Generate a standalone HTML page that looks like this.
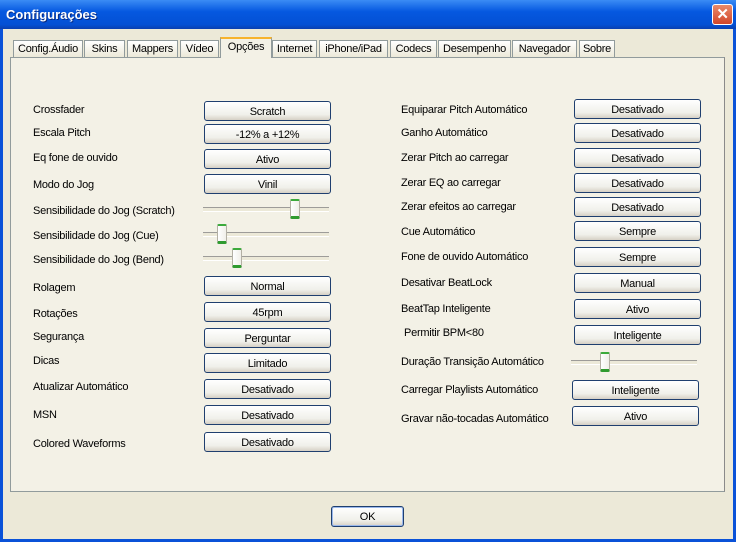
<!DOCTYPE html><html><head><meta charset="utf-8"><style>
body{margin:0;width:736px;height:542px;overflow:hidden;font-family:"Liberation Sans",sans-serif;font-size:11px;letter-spacing:-0.25px;color:#000}
.win{position:absolute;left:0;top:0;width:736px;height:542px;background:#0a52d8}
.title{position:absolute;left:0;top:0;width:736px;height:29px;background:linear-gradient(#3b8cf5,#0558e0 40%,#0450d4 85%,#0a3fb0);}
.title span{position:absolute;left:6px;top:7px;color:#fff;font-weight:bold;font-size:13px;letter-spacing:0;text-shadow:1px 1px #0a2a80}
.close{position:absolute;left:712px;top:4px;width:19px;height:19px;background:linear-gradient(#e98a6a,#d2452a);border:1px solid #fff;border-radius:3px;color:#fff;font-weight:bold;font-size:15px;text-align:center;line-height:19px}
.body{position:absolute;left:3px;top:29px;width:730px;height:510px;background:#ece9d8}
.panel{position:absolute;left:10px;top:57px;width:713px;height:433px;background:#f3f1e6;border:1px solid #919b9c;border-right-color:#8a8a8a}
.tab{position:absolute;top:40px;height:17px;background:linear-gradient(#fff,#ece9d8);border:1px solid #919b9c;border-bottom:none;text-align:center;line-height:17px;box-sizing:border-box}
.tab.sel{top:37px;height:21px;background:#f3f1e6;border-top:2px solid #f7b32d;line-height:16px}
.l{position:absolute;white-space:nowrap}
.b{position:absolute;width:127px;height:20px;box-sizing:border-box;border:1px solid #1f3f6f;border-radius:3px;background:linear-gradient(#fff,#f0f0ea 70%,#d6d0c5);text-align:center;line-height:20px}
.tr{position:absolute;width:126px;height:3px;border-top:1px solid #9d9c99;border-bottom:1px solid #fff;background:#ece9d8}
.th{position:absolute;width:10px;height:20px;box-sizing:border-box;border:1px solid #b3b0a4;border-top:2px solid #3caa3c;border-bottom:3px solid #2f9b2f;background:linear-gradient(90deg,#fff,#f0efe9);border-radius:2px}
</style></head><body><div class="win">
<div class="title"><span>Configurações</span><div class="close">✕</div></div>
<div class="body"></div>
<div class="panel"></div>
<div class="tab" style="left:13px;width:70px">Config.Áudio</div>
<div class="tab" style="left:84px;width:41px">Skins</div>
<div class="tab" style="left:127px;width:51px">Mappers</div>
<div class="tab" style="left:180px;width:39px">Vídeo</div>
<div class="tab sel" style="left:220px;width:52px">Opções</div>
<div class="tab" style="left:272px;width:45px">Internet</div>
<div class="tab" style="left:319px;width:69px">iPhone/iPad</div>
<div class="tab" style="left:390px;width:47px">Codecs</div>
<div class="tab" style="left:438px;width:73px">Desempenho</div>
<div class="tab" style="left:512px;width:65px">Navegador</div>
<div class="tab" style="left:579px;width:36px">Sobre</div>

<div class="l" style="left:33px;top:104px">Crossfader</div><div class="b" style="left:204px;top:101px">Scratch</div>
<div class="l" style="left:33px;top:127px">Escala Pitch</div><div class="b" style="left:204px;top:124px">-12% a +12%</div>
<div class="l" style="left:33px;top:152px">Eq fone de ouvido</div><div class="b" style="left:204px;top:149px">Ativo</div>
<div class="l" style="left:33px;top:179px">Modo do Jog</div><div class="b" style="left:204px;top:174px">Vinil</div>
<div class="l" style="left:33px;top:205px">Sensibilidade do Jog (Scratch)</div><div class="tr" style="left:203px;top:207px"></div><div class="th" style="left:290px;top:199px"></div>
<div class="l" style="left:33px;top:230px">Sensibilidade do Jog (Cue)</div><div class="tr" style="left:203px;top:232px"></div><div class="th" style="left:217px;top:224px"></div>
<div class="l" style="left:33px;top:254px">Sensibilidade do Jog (Bend)</div><div class="tr" style="left:203px;top:256px"></div><div class="th" style="left:232px;top:248px"></div>
<div class="l" style="left:33px;top:282px">Rolagem</div><div class="b" style="left:204px;top:276px">Normal</div>
<div class="l" style="left:33px;top:308px">Rotações</div><div class="b" style="left:204px;top:302px">45rpm</div>
<div class="l" style="left:33px;top:331px">Segurança</div><div class="b" style="left:204px;top:328px">Perguntar</div>
<div class="l" style="left:33px;top:355px">Dicas</div><div class="b" style="left:204px;top:353px">Limitado</div>
<div class="l" style="left:33px;top:381px">Atualizar Automático</div><div class="b" style="left:204px;top:379px">Desativado</div>
<div class="l" style="left:33px;top:409px">MSN</div><div class="b" style="left:204px;top:405px">Desativado</div>
<div class="l" style="left:33px;top:438px">Colored Waveforms</div><div class="b" style="left:204px;top:432px">Desativado</div>

<div class="l" style="left:401px;top:104px">Equiparar Pitch Automático</div><div class="b" style="left:574px;top:99px">Desativado</div>
<div class="l" style="left:401px;top:127px">Ganho Automático</div><div class="b" style="left:574px;top:123px">Desativado</div>
<div class="l" style="left:401px;top:152px">Zerar Pitch ao carregar</div><div class="b" style="left:574px;top:148px">Desativado</div>
<div class="l" style="left:401px;top:177px">Zerar EQ ao carregar</div><div class="b" style="left:574px;top:173px">Desativado</div>
<div class="l" style="left:401px;top:201px">Zerar efeitos ao carregar</div><div class="b" style="left:574px;top:197px">Desativado</div>
<div class="l" style="left:401px;top:226px">Cue Automático</div><div class="b" style="left:574px;top:221px">Sempre</div>
<div class="l" style="left:401px;top:251px">Fone de ouvido Automático</div><div class="b" style="left:574px;top:247px">Sempre</div>
<div class="l" style="left:401px;top:277px">Desativar BeatLock</div><div class="b" style="left:574px;top:273px">Manual</div>
<div class="l" style="left:401px;top:303px">BeatTap Inteligente</div><div class="b" style="left:574px;top:299px">Ativo</div>
<div class="l" style="left:404px;top:327px">Permitir BPM&lt;80</div><div class="b" style="left:574px;top:325px">Inteligente</div>
<div class="l" style="left:401px;top:356px">Duração Transição Automático</div><div class="tr" style="left:571px;top:360px"></div><div class="th" style="left:600px;top:352px"></div>
<div class="l" style="left:401px;top:384px">Carregar Playlists Automático</div><div class="b" style="left:572px;top:380px">Inteligente</div>
<div class="l" style="left:401px;top:413px">Gravar não-tocadas Automático</div><div class="b" style="left:572px;top:406px">Ativo</div>

<div class="b" style="left:331px;top:506px;width:73px;height:21px;box-shadow:inset 0 0 0 1px #9ab8ec">OK</div>
</div></body></html>
